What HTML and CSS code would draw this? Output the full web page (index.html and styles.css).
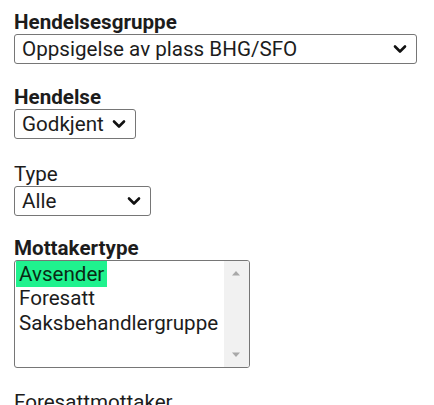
FILE: index.html
```html
<!DOCTYPE html>
<html lang="no">
<head>
<meta charset="utf-8">
<title>Hendelser</title>
<link rel="stylesheet" href="styles.css">
</head>
<body>
<div class="form">
  <div class="field f1">
    <div class="label bold">Hendelsesgruppe</div>
    <div class="select w-group">
      <span class="value">Oppsigelse av plass BHG/SFO</span>
      <svg class="chev" width="14" height="10" viewBox="0 0 14 10"><path d="M2 2.5 L7 7.5 L12 2.5" fill="none" stroke="#111" stroke-width="2.6" stroke-linecap="round" stroke-linejoin="round"/></svg>
    </div>
  </div>
  <div class="field f2">
    <div class="label bold">Hendelse</div>
    <div class="select w-event">
      <span class="value">Godkjent</span>
      <svg class="chev" width="14" height="10" viewBox="0 0 14 10"><path d="M2 2.5 L7 7.5 L12 2.5" fill="none" stroke="#111" stroke-width="2.6" stroke-linecap="round" stroke-linejoin="round"/></svg>
    </div>
  </div>
  <div class="field f3">
    <div class="label">Type</div>
    <div class="select w-type">
      <span class="value">Alle</span>
      <svg class="chev" width="14" height="10" viewBox="0 0 14 10"><path d="M2 2.5 L7 7.5 L12 2.5" fill="none" stroke="#111" stroke-width="2.6" stroke-linecap="round" stroke-linejoin="round"/></svg>
    </div>
  </div>
  <div class="field f4">
    <div class="label bold">Mottakertype</div>
    <div class="listbox">
      <div class="options">
        <div class="option"><span class="hl">Avsender</span></div>
        <div class="option">Foresatt</div>
        <div class="option">Saksbehandlergruppe</div>
      </div>
      <div class="scrollbar">
        <svg width="10" height="6" viewBox="0 0 10 6"><path d="M1 5.5 L5 1 L9 5.5 Z" fill="#a8a8a8"/></svg>
        <svg width="10" height="6" viewBox="0 0 10 6"><path d="M1 0.5 L5 5 L9 0.5 Z" fill="#a8a8a8"/></svg>
      </div>
    </div>
  </div>
  <div class="field f5">
    <div class="label">Foresattmottaker</div>
  </div>
</div>
</body>
</html>
```

FILE: styles.css
```css
html, body {
  margin: 0;
  padding: 0;
  background: #ffffff;
}
body {
  font-family: Roboto, "Liberation Sans", Arial, sans-serif;
  font-size: 20.6px;
  color: #1c1c1c;
  overflow: hidden;
}
.form {
  display: flex;
  flex-direction: column;
  padding: 10px 0 0 14px;
}
.field {
  display: flex;
  flex-direction: column;
  align-items: flex-start;
}
.f2 { margin-top: 21px; }
.f3 { margin-top: 23px; }
.f4 { margin-top: 20px; }
.f5 { margin-top: 22px; }
.label {
  line-height: 24px;
  height: 24px;
  font-weight: 400;
}
.label.bold {
  font-weight: 700;
}
.select {
  box-sizing: border-box;
  height: 30px;
  border: 1px solid #767676;
  border-radius: 3px;
  display: flex;
  align-items: center;
  justify-content: space-between;
  padding: 0 9px 0 7px;
  line-height: 24px;
  background: #fff;
}
.w-group { width: 403px; }
.w-event { width: 122px; }
.w-type { width: 137px; }
.chev { flex: none; }
.listbox {
  box-sizing: border-box;
  width: 236px;
  height: 108px;
  border: 1px solid #767676;
  border-radius: 3px;
  display: flex;
  background: #fff;
  overflow: hidden;
}
.options {
  flex: 1;
  padding: 0 0 0 4px;
}
.option {
  line-height: 25px;
  height: 25px;
  white-space: nowrap;
}
.hl {
  background: #1ff28e;
  color: #0a2a14;
  display: inline-block;
  margin-left: -3px;
  padding: 0 3px;
  line-height: 26px;
}
.scrollbar {
  width: 25px;
  flex: none;
  background: #f1f1f1;
  display: flex;
  flex-direction: column;
  justify-content: space-between;
  align-items: center;
  padding: 9px 2px 9px 0;
  box-sizing: border-box;
}
```
